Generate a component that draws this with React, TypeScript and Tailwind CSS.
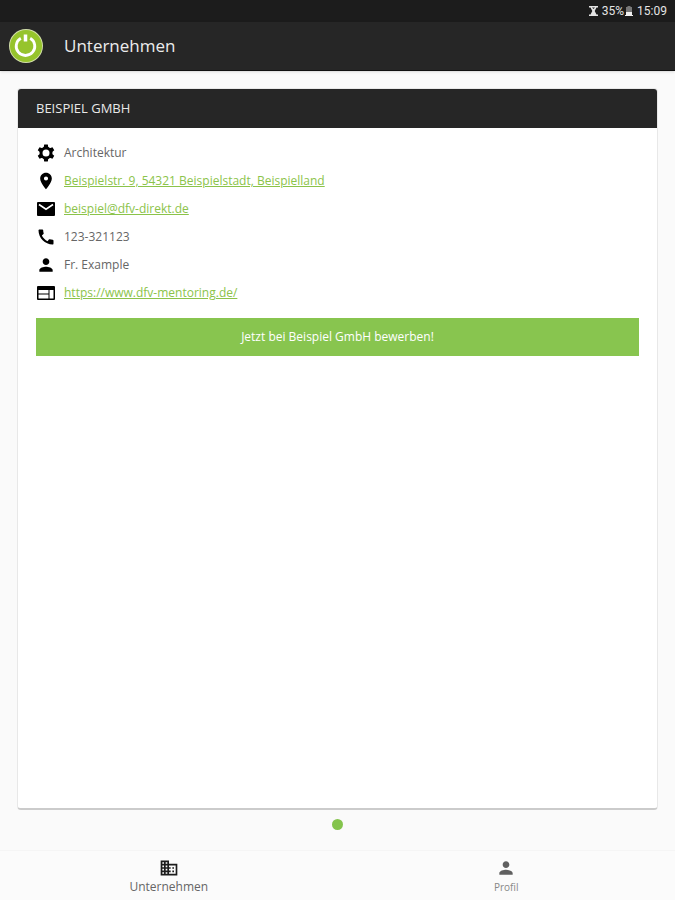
import React from 'react';
import type { IconType } from 'react-icons';
import { MdBusiness, MdCall, MdPerson, MdPlace } from 'react-icons/md';

type IconComponent = IconType | React.FC<React.SVGProps<SVGSVGElement>>;

interface Detail {
  icon: IconComponent;
  text: string;
  href?: string;
}

// Six teeth around a ring with a wide hole
const GearIcon: React.FC<React.SVGProps<SVGSVGElement>> = (props) => (
  <svg viewBox="0 0 20 20" {...props}>
    <g fill="currentColor">
      <path d="M8.200 1.500h3.600l.6 3.500H7.600zM7.600 15h4.800l-.6 3.500H8.200z" />
      <path d="M8.200 1.500h3.600l.6 3.500H7.600zM7.600 15h4.800l-.6 3.500H8.200z" transform="rotate(60 10 10)" />
      <path d="M8.200 1.500h3.600l.6 3.500H7.600zM7.600 15h4.800l-.6 3.500H8.200z" transform="rotate(120 10 10)" />
    </g>
    <circle cx="10" cy="10" r="5" fill="none" stroke="currentColor" strokeWidth="3" />
  </svg>
);

const MailIcon: React.FC<React.SVGProps<SVGSVGElement>> = (props) => (
  <svg viewBox="0 0 20 20" {...props}>
    <rect x="1" y="3" width="18" height="14" rx="1" fill="currentColor" />
    <path d="M3 5.500l7 4.700 7-4.700" fill="none" stroke="#fff" strokeWidth="1.600" />
  </svg>
);

const WebIcon: React.FC<React.SVGProps<SVGSVGElement>> = (props) => (
  <svg viewBox="0 0 20 20" {...props}>
    <rect x="1" y="3" width="18" height="14" rx="1" fill="currentColor" />
    <path d="M2.500 7h10v3.500h-10zM2.500 11.500h10v4h-10zM13.500 7h4v8.500h-4z" fill="#fff" />
  </svg>
);

const details: Detail[] = [
  { icon: GearIcon, text: 'Architektur' },
  { icon: MdPlace, text: 'Beispielstr. 9, 54321 Beispielstadt, Beispielland', href: '#adresse' },
  { icon: MailIcon, text: 'beispiel@dfv-direkt.de', href: 'mailto:beispiel@dfv-direkt.de' },
  { icon: MdCall, text: '123-321123' },
  { icon: MdPerson, text: 'Fr. Example' },
  { icon: WebIcon, text: 'https://www.dfv-mentoring.de/', href: 'https://www.dfv-mentoring.de/' },
];

const StatusBar: React.FC = () => (
  <div className="flex h-[22px] items-center justify-end gap-1 bg-[#1c1c1c] px-2 font-['Roboto',sans-serif] text-xs text-[#e4e4e4]">
    <svg viewBox="0 0 9 10" className="h-[10px] w-[9px]" fill="currentColor" aria-hidden="true">
      <path d="M0 0h9v1.5H7.5L5.7 5l1.8 3.5H9V10H0V8.500h1.500L3.300 5 1.500 1.500H0z" />
      <path d="M3 1.500h3L4.500 3z" fill="#1c1c1c" />
    </svg>
    <div className="flex items-center gap-px">
      <span>35%</span>
      <svg viewBox="0 0 8 10" className="h-[10px] w-2" aria-hidden="true">
        <path d="M2.500 0h3v1H7v5H1V1h1.500z" fill="#777" />
        <path d="M1 6h6v3h1v1H0V9h1z" fill="#f0f0f0" />
      </svg>
    </div>
    <span>15:09</span>
  </div>
);

const Logo: React.FC = () => (
  <svg viewBox="0 0 36 36" className="size-9" aria-hidden="true">
    <circle cx="18" cy="18" r="17" fill="#d3dfaa" />
    <circle cx="18" cy="18" r="16" fill="#96c42c" />
    <path d="M12.800 10.200a9.300 9.300 0 1 0 9.400 0" fill="none" stroke="#fff" strokeWidth="2.800" />
    <path d="M17.500 6.500v7" stroke="#fff" strokeWidth="3.500" />
  </svg>
);

export default function App() {
  return (
    <div className="flex min-h-screen flex-col bg-[#fafafa] font-['Open_Sans','Noto_Sans',sans-serif]">
      <StatusBar />

      <header className="flex h-[49px] items-center gap-5 border-b border-[#111] bg-[#262626] px-2 shadow-sm">
        <Logo />
        <h1 className="text-[17px] text-[#ececec]">Unternehmen</h1>
      </header>

      <main className="flex flex-1 flex-col px-[17px] pt-[17px]">
        <article className="flex flex-1 flex-col overflow-hidden rounded-[4px] border border-b-2 border-[#e8e8e8] border-b-[#cbcbcb] bg-white">
          <h2 className="flex h-[39px] items-center bg-[#262626] px-[18px] text-[13px] text-[#e8e8e8]">BEISPIEL GMBH</h2>

          <ul className="px-[18px] pt-[11px]">
            {details.map(({ icon: Icon, text, href }) => (
              <li key={text} className="flex h-7 items-center gap-2 text-xs">
                <Icon className="size-5 text-black" aria-hidden="true" />
                {href ? (
                  <a href={href} className="text-[#8bc34a] underline">{text}</a>
                ) : (
                  <span className="text-[#666]">{text}</span>
                )}
              </li>
            ))}
          </ul>

          <button type="button" className="mx-[18px] mt-[11px] h-[38px] bg-[#88c54f] text-xs text-white">
            Jetzt bei Beispiel GmbH bewerben!
          </button>
        </article>

        <div className="flex h-10 justify-center pt-[9px]">
          <span className="size-[11px] rounded-full bg-[#84c44c]"></span>
        </div>
      </main>

      <nav className="grid h-[50px] grid-cols-2 border-t border-[#f5f5f5] bg-[#fbfbfb]">
        <a href="#unternehmen" aria-current="page" className="flex flex-col items-center pt-[7px] text-xs leading-[18px] text-[#666]">
          <MdBusiness className="size-5 text-[#1c1c1c]" aria-hidden="true" />
          Unternehmen
        </a>
        <a href="#profil" className="flex flex-col items-center pt-[7px] text-[10px] leading-[18px] text-[#888]">
          <MdPerson className="size-5 text-[#606060]" aria-hidden="true" />
          Profil
        </a>
      </nav>
    </div>
  );
}
